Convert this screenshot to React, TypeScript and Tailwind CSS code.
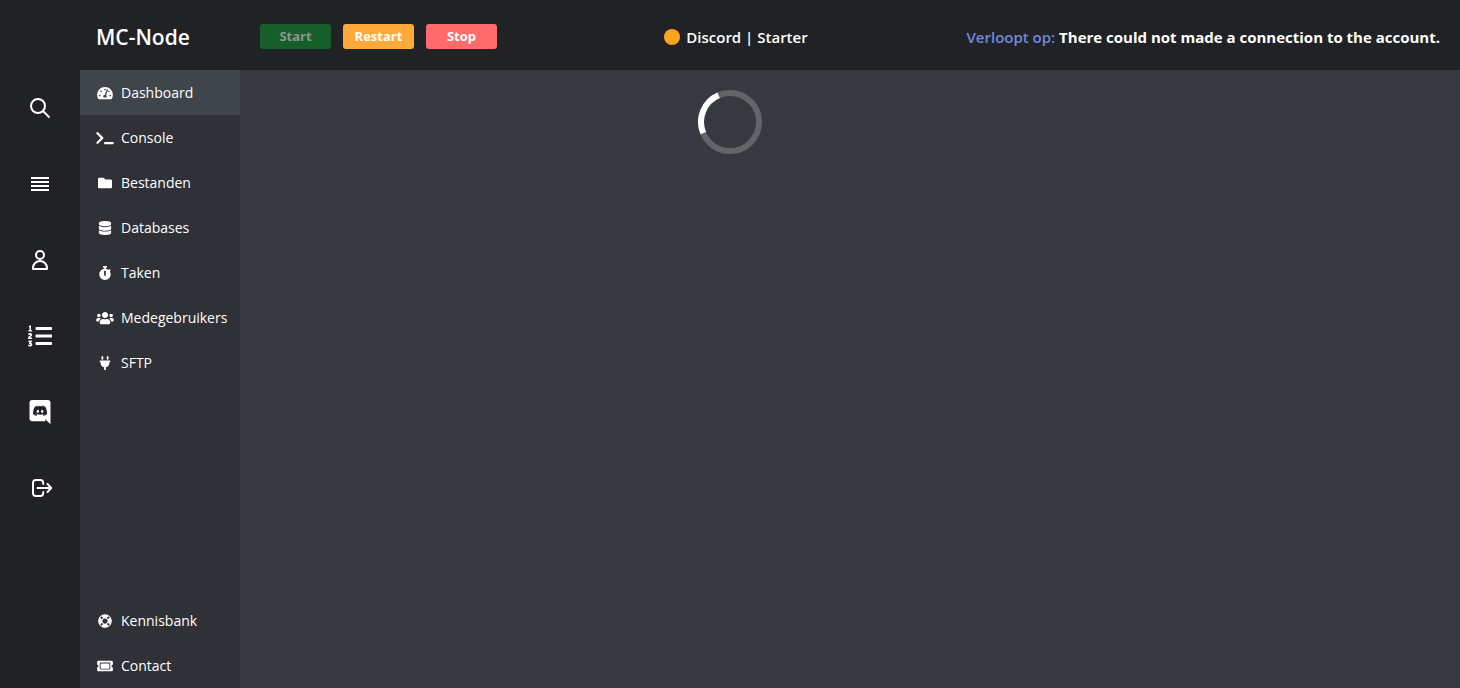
import type { ReactNode } from "react";
import {
  FaTachometerAlt,
  FaTerminal,
  FaFolder,
  FaDatabase,
  FaStopwatch,
  FaUsers,
  FaPlug,
  FaLifeRing,
  FaTicketAlt,
  FaListOl,
} from "react-icons/fa";

const stroke = {
  width: 24,
  height: 24,
  viewBox: "0 0 24 24",
  fill: "none",
  stroke: "currentColor",
  strokeWidth: 2,
  "aria-hidden": true,
} as const;

const rail: { label: string; icon: ReactNode }[] = [
  {
    label: "Zoeken",
    icon: (
      <svg {...stroke}>
        <circle cx="10" cy="10" r="7" />
        <path d="M15 15l6.5 6.5" />
      </svg>
    ),
  },
  {
    label: "Menu",
    icon: (
      <svg {...stroke}>
        <path d="M3 6h18M3 10h18M3 14h18M3 18h18" />
      </svg>
    ),
  },
  {
    label: "Account",
    icon: (
      <svg {...stroke} strokeLinejoin="round">
        <circle cx="12" cy="7" r="4" />
        <path d="M5 21v-1a7 7 0 0 1 14 0v1z" />
      </svg>
    ),
  },
  { label: "Lijst", icon: <FaListOl size={24} /> },
  {
    label: "Discord",
    icon: (
      <svg width="22" height="24" viewBox="0 0 448 512" fill="currentColor" aria-hidden="true">
        <path d="M297.216 243.2c0 15.616-11.52 28.416-26.112 28.416-14.336 0-26.112-12.8-26.112-28.416s11.52-28.416 26.112-28.416c14.592 0 26.112 12.8 26.112 28.416zm-119.552-28.416c-14.592 0-26.112 12.8-26.112 28.416s11.776 28.416 26.112 28.416c14.592 0 26.112-12.8 26.112-28.416.256-15.616-11.52-28.416-26.112-28.416zM448 52.736V512c-64.494-56.994-43.868-38.128-118.784-107.776l13.568 47.36H52.48C23.552 451.584 0 428.032 0 398.848V52.736C0 23.552 23.552 0 52.48 0h343.04C424.448 0 448 23.552 448 52.736zm-72.96 242.688c0-82.432-36.864-149.248-36.864-149.248-36.864-27.648-71.936-26.88-71.936-26.88l-3.584 4.096c43.52 13.312 63.744 32.512 63.744 32.512-60.811-33.329-132.244-33.335-191.232-7.424-9.472 4.352-15.104 7.424-15.104 7.424s21.248-20.224 67.328-33.536l-2.56-3.072s-35.072-.768-71.936 26.88c0 0-36.864 66.816-36.864 149.248 0 0 21.504 37.12 78.08 38.912 0 0 9.472-11.52 17.152-21.248-32.512-9.728-44.8-30.208-44.8-30.208 3.766 2.636 9.976 6.053 10.496 6.4 43.21 24.198 104.588 32.126 159.744 8.96 8.96-3.328 18.944-8.192 29.44-15.104 0 0-12.8 20.992-46.336 30.464 7.68 9.728 16.896 20.736 16.896 20.736 56.576-1.792 78.336-38.912 78.336-38.912z" />
      </svg>
    ),
  },
  {
    label: "Uitloggen",
    icon: (
      <svg {...stroke} strokeLinecap="round" strokeLinejoin="round">
        <path d="M15.2 8V7A3 3 0 0 0 12.2 4H8A3 3 0 0 0 5 7v10A3 3 0 0 0 8 20h4.2a3 3 0 0 0 3-3V16M9.5 12H23M19.5 8l3.7 4-3.7 4" />
      </svg>
    ),
  },
];

const nav = [
  { label: "Dashboard", Icon: FaTachometerAlt },
  { label: "Console", Icon: FaTerminal },
  { label: "Bestanden", Icon: FaFolder },
  { label: "Databases", Icon: FaDatabase },
  { label: "Taken", Icon: FaStopwatch },
  { label: "Medegebruikers", Icon: FaUsers },
  { label: "SFTP", Icon: FaPlug },
];

const support = [
  { label: "Kennisbank", Icon: FaLifeRing },
  { label: "Contact", Icon: FaTicketAlt },
];

function NavList({ items, active }: { items: typeof nav; active?: string }) {
  return (
    <ul>
      {items.map(({ label, Icon }) => (
        <li key={label}>
          <a
            href="#"
            className={
              label === active
                ? "flex h-[45px] items-center gap-[7px] bg-[#40444b] pl-4 text-sm"
                : "flex h-[45px] items-center gap-[7px] pl-4 text-sm hover:bg-[#40444b]"
            }
          >
            <Icon className="h-[14px] w-[18px] shrink-0" />
            {label}
          </a>
        </li>
      ))}
    </ul>
  );
}

export default function App() {
  return (
    <div className="flex min-h-screen flex-col bg-[#202225] font-['Open_Sans','Noto_Sans',sans-serif] text-white">
      <header className="grid h-[70px] grid-cols-[1fr_auto_1fr] items-center pt-1">
        <div className="flex items-center pb-px pl-24">
          <h1 className="w-[164px] text-[21px] leading-6 font-semibold">MC-Node</h1>
          <div className="flex gap-3 text-[13px] font-bold">
            <button type="button" disabled className="h-[25px] w-[71px] rounded-[3px] bg-[#165e2a] text-[#8f9490]">
              Start
            </button>
            <button type="button" className="h-[25px] w-[71px] rounded-[3px] bg-[#ffa93a]">
              Restart
            </button>
            <button type="button" className="h-[25px] w-[71px] rounded-[3px] bg-[#ff6b6b]">
              Stop
            </button>
          </div>
        </div>
        <div className="flex items-center gap-1.5 pl-3 text-[15px] font-semibold">
          <span className="size-4 rounded-full bg-[#ffa31f]" />
          <span>Discord | Starter</span>
        </div>
        <p className="pr-5 text-right text-[15px] font-bold whitespace-nowrap">
          <span className="font-semibold text-[#7289da]">Verloopt op:</span> There could not made a connection to the account.
        </p>
      </header>
      <div className="flex flex-1">
        <nav aria-label="Hoofdmenu" className="flex w-20 shrink-0 flex-col">
          {rail.map(({ label, icon }) => (
            <a key={label} href="#" aria-label={label} className="flex h-[76px] items-center justify-center">
              {icon}
            </a>
          ))}
        </nav>
        <nav aria-label="Servermenu" className="flex w-40 shrink-0 flex-col justify-between bg-[#2f3136]">
          <NavList items={nav} active="Dashboard" />
          <NavList items={support} />
        </nav>
        <main className="flex-1 bg-[#36393f] pt-5 pr-60">
          <svg role="status" aria-label="Laden" className="mx-auto" width="64" height="64" viewBox="0 0 64 64" fill="none" strokeWidth="6">
            <circle cx="32" cy="32" r="29" stroke="#636467" />
            <path d="M5.3 43.2A29 29 0 0 1 20.6 5.3" stroke="#fff" />
          </svg>
        </main>
      </div>
    </div>
  );
}
